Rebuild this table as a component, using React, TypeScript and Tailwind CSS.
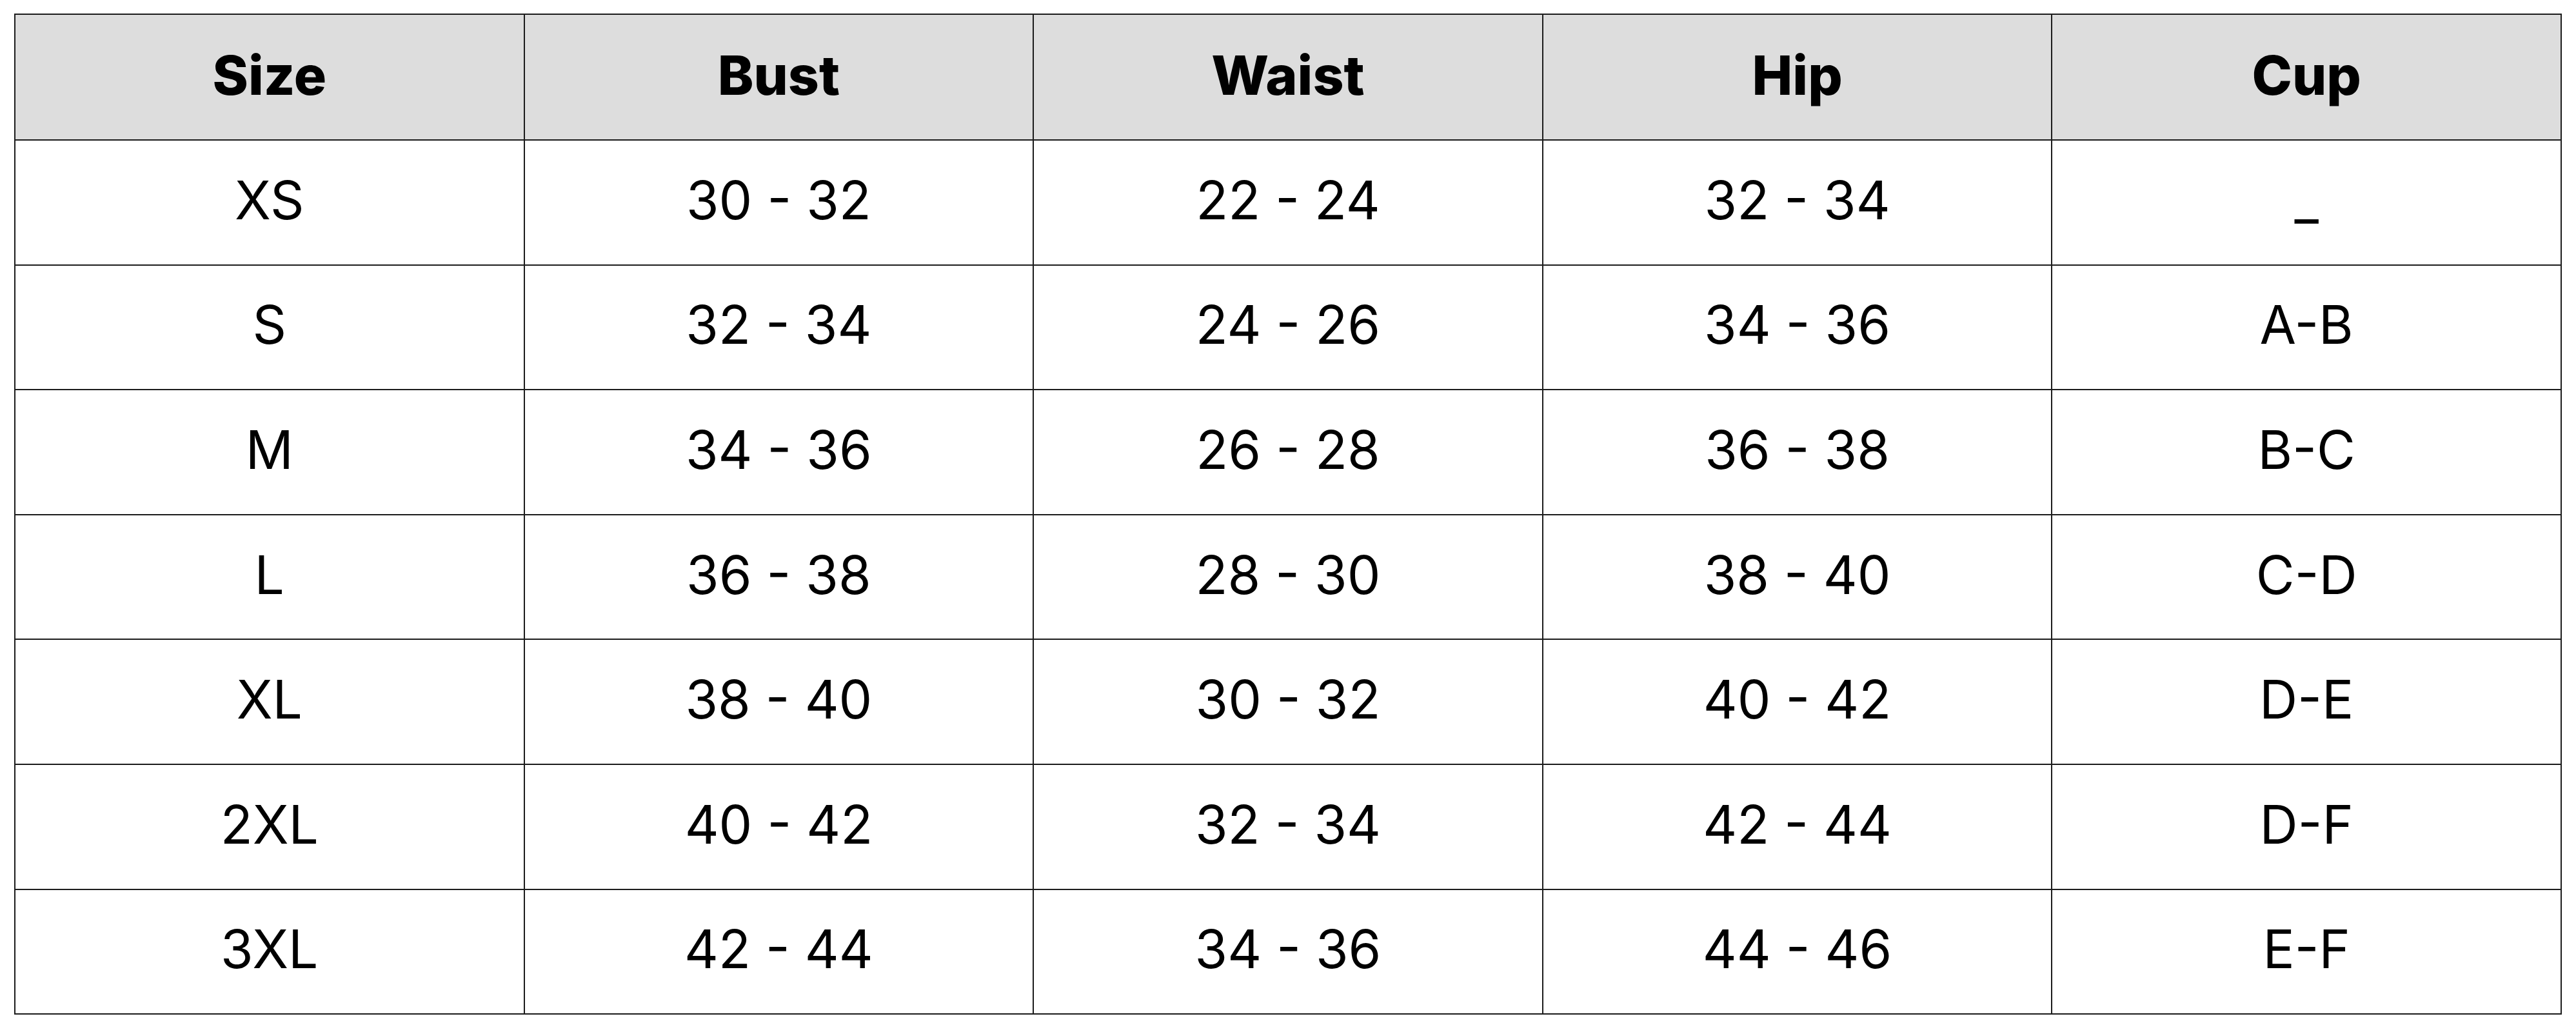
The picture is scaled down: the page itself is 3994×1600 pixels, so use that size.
const headers = ["Size", "Bust", "Waist", "Hip", "Cup"]

const rows = [
  ["XS", "30 - 32", "22 - 24", "32 - 34", "_"],
  ["S", "32 - 34", "24 - 26", "34 - 36", "A-B"],
  ["M", "34 - 36", "26 - 28", "36 - 38", "B-C"],
  ["L", "36 - 38", "28 - 30", "38 - 40", "C-D"],
  ["XL", "38 - 40", "30 - 32", "40 - 42", "D-E"],
  ["2XL", "40 - 42", "32 - 34", "42 - 44", "D-F"],
  ["3XL", "42 - 44", "34 - 36", "44 - 46", "E-F"],
]

export default function App() {
  return (
    <div className="w-[3994px] h-[1600px] bg-white pl-[22px] pt-[21px] font-['Inter','Liberation_Sans',sans-serif] text-black">
      {/* Size chart */}
      <div className="w-[3950px] grid grid-cols-5 border-l-2 border-t-2 border-[#1c1c1c]">
        {headers.map((h) => (
          <div
            key={h}
            className="h-[195px] flex items-center justify-center pb-[6px] bg-[#dddddd] border-r-2 border-b-2 border-[#1c1c1c] text-[84px] leading-none font-extrabold"
          >
            {h}
          </div>
        ))}
        {rows.map((row) =>
          row.map((cell, i) => (
            <div
              key={row[0] + i}
              className="h-[193.6px] flex items-center justify-center pb-[6px] bg-white border-r-2 border-b-2 border-[#1c1c1c] text-[82px] leading-none"
            >
              {cell}
            </div>
          ))
        )}
      </div>
    </div>
  )
}
